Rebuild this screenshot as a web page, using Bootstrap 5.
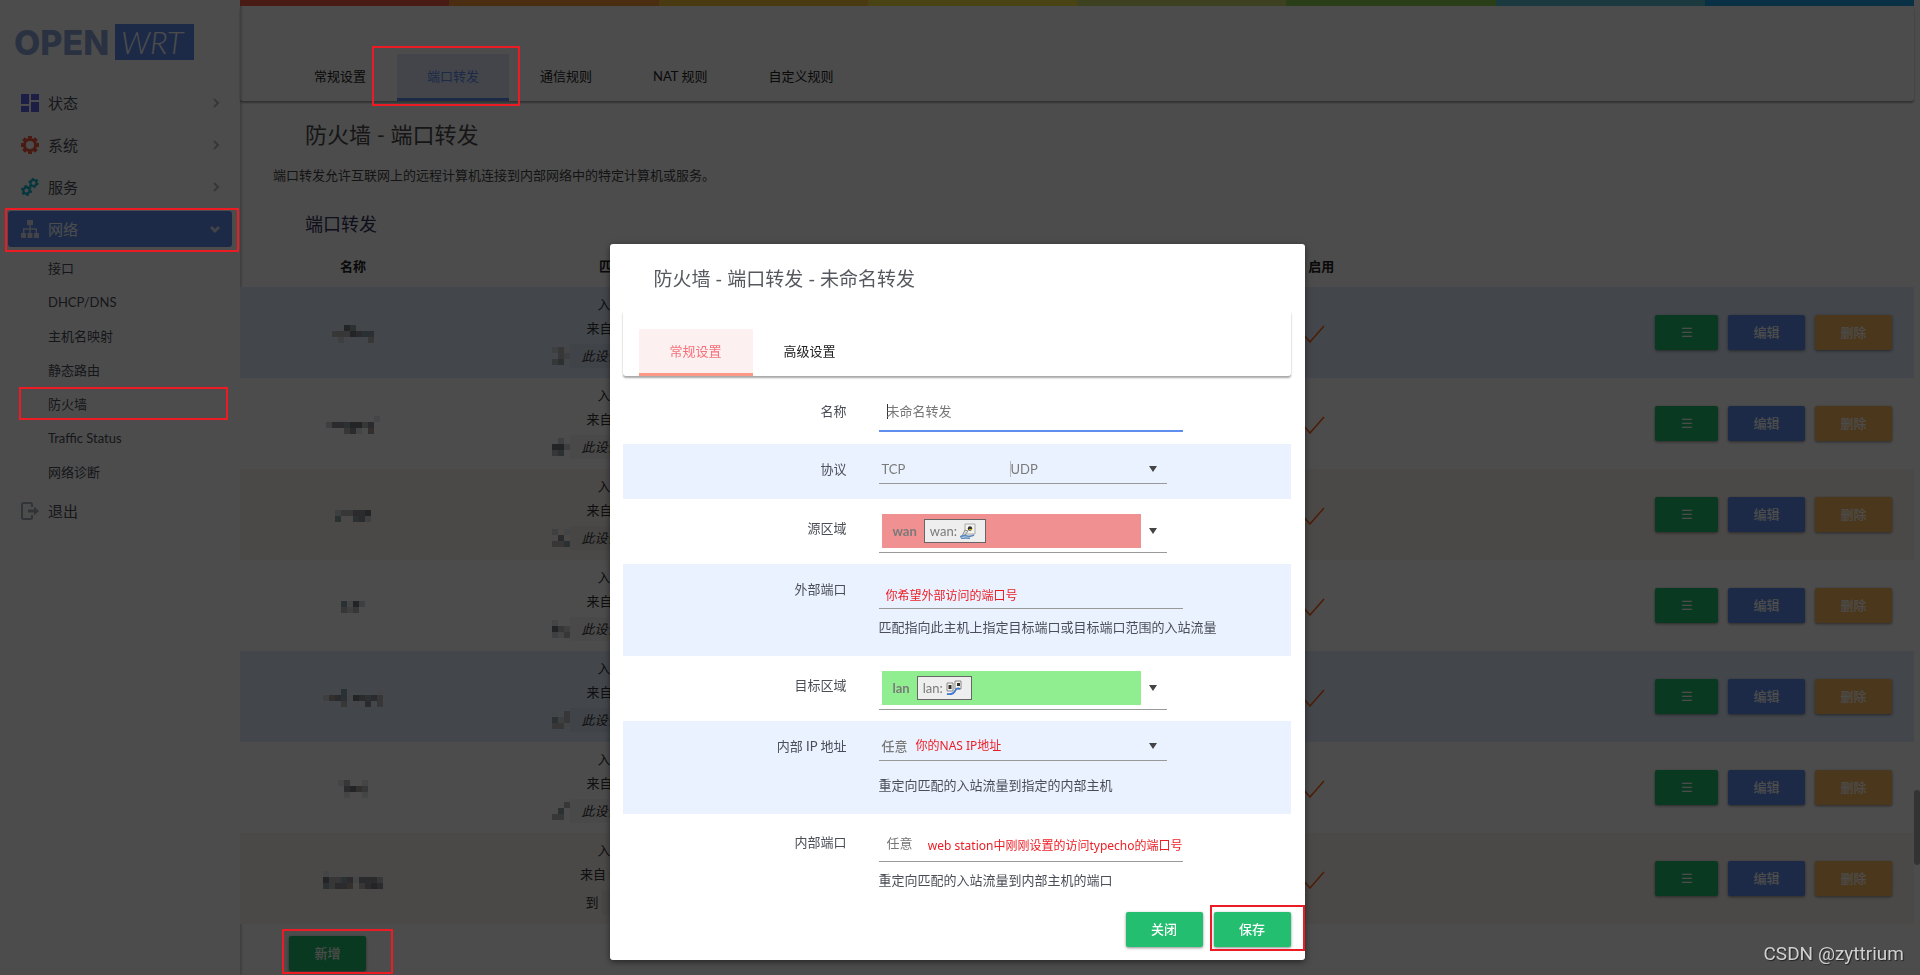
<!DOCTYPE html>
<html lang="zh-CN">
<head>
<meta charset="utf-8">
<meta name="viewport" content="width=device-width, initial-scale=1">
<title>OpenWrt - 防火墙</title>
<link href="https://cdn.jsdelivr.net/npm/bootstrap@5.3.0/dist/css/bootstrap.min.css" rel="stylesheet">
<style>
:root{--pick:#ed1c24;--blue:#5e8eee;--green:#24be70;--orange:#fab75c}
body{font-family:Lato,"Noto Sans CJK SC",sans-serif;font-size:13px;line-height:20px;color:#4a4e57;background:#fff;min-height:100vh;padding-right:6px}
a{color:inherit;text-decoration:none}
/* sidebar */
.side{width:240px;box-shadow:0 0 4px rgba(0,0,0,.45)}
.brand{padding:18px 0 19px 14px}
.side-nav{padding:0 8px}
.side-item{height:36px;margin-bottom:6px;padding:0 12px 0 13px;font-size:15px;border-radius:3px}
.side-item .ico{width:18px;height:18px;margin-right:9px}
.side-item.current{background:var(--blue);color:#fff}
.sub-nav{padding:0 8px 0 40px;margin-bottom:6px}
.sub-nav a{display:block;height:30px;margin-bottom:4px;line-height:30px}
.sub-nav .on{border-bottom:1px solid #5e72e4}
.pick{position:absolute;z-index:1052;border:2px solid var(--pick);pointer-events:none}
.pick-side{inset:-3px -7px -5px -3px}
.pick-sub{inset:-2px -4px -2px -29px}
.pick-tab{inset:-8px -11px -8px -25px}
.pick-add{inset:-7px -27px -3px -7px}
.pick-save{inset:-7px -14px -4px -4px}
/* main */
.stripes{height:6px}
.stripes i{flex:1}
.tab-strip{box-shadow:0 2px 2px rgba(0,0,0,.35);border-radius:3px}
.main-tabs{padding:48px 0 0 44px}
.main-tabs nav{gap:1px}
.tab-link{display:block;height:47px;line-height:44px;padding:0 30px;border-bottom:3px solid transparent;color:#222}
.main-tabs .tab-link.on{background:#dfe6f8;border-color:var(--blue);color:var(--blue)}
.main-title{font-size:22px;line-height:28px;margin:20px 0 16px 65px;color:#4a4a4a}
.desc{margin:0 0 27px 33px;color:#444}
.sec-title{font-size:18px;line-height:24px;margin:0 0 22px 65px;color:#32325d}
.rules{table-layout:fixed;margin:0;width:100%}
.rules th,.rules td{padding:0;text-align:center;vertical-align:middle;border:0;color:#333}
.rules th{height:29px;line-height:17px;padding-bottom:12px;color:#222}
.rules tr>*{background:transparent}
.rules tbody td{height:91px}
.t0{background:#dfebfb}.t1{background:#fefefe}.t2{background:#f8f4ed}
.rule-line{height:24px;line-height:24px}
.rule-line.last{height:33px;line-height:26px;padding-top:3px}
.addr{position:relative;background:rgba(0,0,0,.04);padding:4px 17px 4px 11px;font-style:italic}
.mask{position:absolute;right:100%;top:3px}
.btns{gap:10px;padding-right:22px}
.btn-rule{height:35px;padding:0;border:0;border-radius:2px;color:#fff;font-size:13px;line-height:33px;font-weight:500;box-shadow:0 1px 3px rgba(0,0,0,.45)}
.w-s{width:63px}.w-m{width:77px}
.b-green{background:var(--green)}.b-blue{background:var(--blue)}.b-orange{background:var(--orange)}
.foot-add{padding:12px 0 3px 49px}
.thumb{position:fixed;right:0;top:81vh;width:6px;height:75px;border-radius:3px;background:#aaa}
/* dialog */
.shade{z-index:1050;position:fixed;inset:0;background:rgba(0,0,0,.7)}
.dlg-wrap{padding:25vh 6px 0 0;overflow:hidden}
.dlg{width:695px;max-width:100%;margin:0 auto}
.dlg-box{border:0;border-radius:3px;padding:20px 14px 13px 13px;box-shadow:0 2px 6px rgba(0,0,0,.5)}
.dlg-title{font-size:19px;line-height:30px;margin:0 0 16px 31px;font-weight:400;color:#55585e}
.dlg-tabs{padding:19px 0 0 16px;margin-bottom:13px}
.dlg-tabs .tab-link{padding:0 31px}
.dlg-tabs .tab-link.on{background:#fdf0f0;border-color:#fb9886;color:#f5707a}
.dlg-foot{gap:11px}
.f-row{padding:15px 0;color:#4a4e57}
.f-row.tint{background:#ebf2ff}
.f-name{padding:12px 0 8px}
.f-zone{padding-bottom:7px}
.f-last{padding:18px 0 22px}
.f-label{width:224px;text-align:right;margin-right:32px;line-height:20px}
.f-field{position:relative;width:304px;height:30px;padding:0 8px 6px;font-size:13px;border:0;border-bottom:1px solid #999;border-radius:0;background:transparent;outline:0;color:#777;display:block}
.f-field::placeholder{color:#777;opacity:1}
.f-field.active{border-bottom:2px solid var(--blue);height:31px;margin-bottom:4px;padding-bottom:8px;background:linear-gradient(#333,#333) 8px 3px/1px 15px no-repeat}
.f-field.noted{color:var(--pick);font-family:"Noto Sans","Noto Sans CJK SC",sans-serif;font-size:12px;padding:4px 7px 0}
.pull{width:288px;padding:0 10px 4px 3px;border:0;border-bottom:1px solid #999;background:transparent;color:#7a7a7a;text-align:left;font-size:13px;line-height:20px}
.pull .car{width:0;height:0;border:4px solid transparent;border-top:6px solid #444;border-bottom:0}
.opt-a{width:128px}.opt-b{border-left:1px solid #bbb;line-height:16px}
.zone{width:259px;height:34px;padding-left:11px}
.z-wan{background:#f09090}.z-lan{background:#90ee90}
.chip{height:24px;margin-left:7px;padding:0 9px 0 5px;border:1px solid #666;background:#eee}
.hint{margin-top:14px;padding-bottom:4px}
.note{position:absolute;white-space:nowrap;font-weight:400;color:var(--pick);font-family:"Noto Sans","Noto Sans CJK SC",sans-serif;font-size:12px}
.csdn{position:fixed;z-index:1060;right:16px;bottom:9px;font:19px/24px Roboto,"Liberation Sans",sans-serif;color:#d0d0d0;text-shadow:1px 1px 1px #222}
</style>
</head>
<body>
<div class="d-flex min-vh-100">
  <aside class="side flex-shrink-0">
    <div class="brand">
      <svg width="180" height="48" class="d-block" role="img" aria-label="OpenWrt">
        <text x="0" y="37" font-family="Inter" font-weight="800" font-size="34" fill="#8da8de">OPEN</text>
        <rect x="101" y="6" width="79" height="36" fill="#5e8eee"/>
        <text x="107" y="36" font-family="Lato" font-style="italic" font-weight="300" font-size="31" fill="#fff">WRT</text>
      </svg>
    </div>
    <nav class="side-nav">
      <a href="#" class="side-item d-flex align-items-center"><svg class="ico" viewBox="0 0 18 18" fill="#6064ea"><path d="M0 0h8v10H0zM10 0h8v6h-8zM0 12h8v6H0zM10 8h8v10h-8z"/></svg><span class="flex-grow-1">状态</span><svg width="8" height="10" viewBox="0 0 8 10" fill="none" stroke="#b4b8bd" stroke-width="2"><path d="M2 1l4 4-4 4"/></svg></a>
      <a href="#" class="side-item d-flex align-items-center"><svg class="ico" viewBox="0 0 18 18"><g stroke="#f4573c" fill="none"><circle cx="9" cy="9" r="5.6" stroke-width="3"/><path stroke-width="4" d="M9 0v2.500M9 15.500V18M0 9h2.500M15.500 9H18M2.600 2.600l2 2M13.400 13.400l2 2M2.600 15.400l2-2M13.400 4.600l2-2"/></g></svg><span class="flex-grow-1">系统</span><svg width="8" height="10" viewBox="0 0 8 10" fill="none" stroke="#b4b8bd" stroke-width="2"><path d="M2 1l4 4-4 4"/></svg></a>
      <a href="#" class="side-item d-flex align-items-center"><svg class="ico" viewBox="0 0 18 18"><g stroke="#11b4cf" fill="none"><circle cx="12.500" cy="5" r="3" stroke-width="2"/><circle cx="12.500" cy="5" r="4.400" stroke-width="1.600" stroke-dasharray="2.200 2.400"/><circle cx="5.500" cy="12.500" r="3.200" stroke-width="2.400"/><circle cx="5.500" cy="12.500" r="4.800" stroke-width="1.600" stroke-dasharray="2.400 2.600"/></g></svg><span class="flex-grow-1">服务</span><svg width="8" height="10" viewBox="0 0 8 10" fill="none" stroke="#b4b8bd" stroke-width="2"><path d="M2 1l4 4-4 4"/></svg></a>
      <a href="#" class="side-item current position-relative d-flex align-items-center"><svg class="ico" viewBox="0 0 18 18" fill="#dfe4ee"><path d="M6 0h6v5H6zM0 13h5v5H0zM6.500 13h5v5h-5zM13 13h5v5h-5zM8.300 5h1.400v8H8.300zM2 8.300h14v1.400H2zM2 9h1.400v4H2zM14.600 9H16v4h-1.400z"/></svg><span class="flex-grow-1">网络</span><svg width="10" height="8" viewBox="0 0 10 8" fill="none" stroke="#dfe4ee" stroke-width="2.800"><path d="M1 2l4 4 4-4"/></svg><span class="pick pick-side"></span></a>
      <div class="sub-nav">
        <a href="#">接口</a><a href="#">DHCP/DNS</a><a href="#">主机名映射</a><a href="#">静态路由</a>
        <a href="#" class="on position-relative">防火墙<span class="pick pick-sub"></span></a>
        <a href="#">Traffic Status</a><a href="#">网络诊断</a>
      </div>
      <a href="#" class="side-item d-flex align-items-center"><svg class="ico" viewBox="0 0 18 18"><path d="M11 5V2.500Q11 1 9.500 1h-7Q1 1 1 2.500v13Q1 17 2.500 17h7q1.500 0 1.500-1.500V13" fill="none" stroke="#a6aeb8" stroke-width="2"/><path d="M7 7.500h6V4.500L18 9l-5 4.500v-3H7z" fill="#a6aeb8"/></svg><span>退出</span></a>
    </nav>
  </aside>

  <main class="flex-grow-1">
    <div class="stripes d-flex" id="stripes"></div>
    <div class="tab-strip main-tabs">
      <nav class="d-flex">
        <a href="#" class="tab-link">常规设置</a>
        <a href="#" class="tab-link on position-relative">端口转发<span class="pick pick-tab"></span></a>
        <a href="#" class="tab-link">通信规则</a>
        <a href="#" class="tab-link">NAT 规则</a>
        <a href="#" class="tab-link">自定义规则</a>
      </nav>
    </div>
    <h2 class="main-title fw-normal">防火墙 - 端口转发</h2>
    <p class="desc">端口转发允许互联网上的远程计算机连接到内部网络中的特定计算机或服务。</p>
    <h3 class="sec-title fw-normal">端口转发</h3>
    <table class="table rules">
      <colgroup><col style="width:13.5%"><col style="width:19%"><col style="width:29.6%"><col style="width:5%"><col></colgroup>
      <thead><tr><th>名称</th><th>匹配规则</th><th></th><th>启用</th><th></th></tr></thead>
      <tbody id="rules"></tbody>
    </table>
    <div class="foot-add"><span class="position-relative d-inline-flex"><button type="button" class="btn-rule w-m b-green">新增</button><span class="pick pick-add"></span></span></div>
  </main>
</div>
<div class="thumb"></div>
<div class="shade"></div>

<div class="modal d-block dlg-wrap" role="dialog" aria-labelledby="dlgTitle">
  <div class="dlg">
    <div class="modal-content dlg-box">
      <h4 class="dlg-title" id="dlgTitle">防火墙 - 端口转发 - 未命名转发</h4>
      <nav class="tab-strip dlg-tabs d-flex">
        <a href="#" class="tab-link on">常规设置</a><a href="#" class="tab-link">高级设置</a>
      </nav>
      <form>
        <div class="f-row f-name d-flex">
          <label class="f-label" for="fName">名称</label>
          <div><input id="fName" class="f-field active" placeholder="未命名转发"></div>
        </div>
        <div class="f-row tint d-flex">
          <label class="f-label" for="fProto">协议</label>
          <button type="button" id="fProto" class="pull d-flex align-items-center"><span class="opt-a">TCP</span><span class="opt-b flex-grow-1">UDP</span><i class="car"></i></button>
        </div>
        <div class="f-row f-zone d-flex">
          <label class="f-label pt-1" for="fSrc">源区域</label>
          <button type="button" id="fSrc" class="pull d-flex align-items-center mb-1"><span class="zone z-wan d-flex align-items-center"><b>wan</b><span class="chip d-flex align-items-center">wan:&nbsp;<svg width="16" height="16" viewBox="0 0 16 16"><path d="M5 1h10v10H5z" fill="#f4f4ee" stroke="#aaa"/><circle cx="10" cy="5.500" r="2.200" fill="#333"/><path d="M9 6.500h3" stroke="#c8b400"/><path d="M5 7l3 1-3 4-3 1z" fill="#ddd" stroke="#777" stroke-width=".8"/><path d="M0 14q4-2 7-1t7-1M1 15.500q5-1 9 0" stroke="#5d89bf" stroke-width="1.600" fill="none"/></svg></span></span><i class="car ms-2"></i></button>
        </div>
        <div class="f-row tint d-flex">
          <label class="f-label" for="fPort">外部端口</label>
          <div><input id="fPort" class="f-field noted" value="你希望外部访问的端口号"><div class="mt-2 pb-1">匹配指向此主机上指定目标端口或目标端口范围的入站流量</div></div>
        </div>
        <div class="f-row f-zone d-flex">
          <label class="f-label pt-1" for="fDst">目标区域</label>
          <button type="button" id="fDst" class="pull d-flex align-items-center mb-1"><span class="zone z-lan d-flex align-items-center"><b>lan</b><span class="chip d-flex align-items-center">lan:&nbsp;<svg width="16" height="16" viewBox="0 0 16 16"><path d="M1 3h6v8H1zM9 1h6v8H9z" fill="#f4f4ee" stroke="#888"/><path d="M2.500 5h3v4h-3zM11 3h3v3h-3z" fill="#333"/><path d="M1 14q6 1 8-3t5-2" stroke="#3f7ad0" stroke-width="1.800" fill="none"/></svg></span></span><i class="car ms-2"></i></button>
        </div>
        <div class="f-row tint d-flex">
          <label class="f-label" for="fIp">内部 IP 地址</label>
          <div><button type="button" id="fIp" class="pull d-flex align-items-center"><span class="position-relative fw-medium">任意<span class="note ms-2">你的NAS IP地址</span></span><i class="car ms-auto"></i></button><div class="hint">重定向匹配的入站流量到指定的内部主机</div></div>
        </div>
        <div class="f-row f-last d-flex">
          <label class="f-label" for="fInPort">内部端口</label>
          <div class="position-relative"><input id="fInPort" class="f-field" placeholder="任意"><span class="note top-0 end-0 pt-1">web station中刚刚设置的访问typecho的端口号</span><div class="mt-2">重定向匹配的入站流量到内部主机的端口</div></div>
        </div>
      </form>
      <div class="dlg-foot d-flex justify-content-end">
        <button type="button" class="btn-rule w-m b-green">关闭</button>
        <span class="position-relative d-inline-flex"><button type="button" class="btn-rule w-m b-green">保存</button><span class="pick pick-save"></span></span>
      </div>
    </div>
  </div>
</div>
<div class="csdn">CSDN @zyttrium</div>

<script src="https://cdn.jsdelivr.net/npm/bootstrap@5.3.0/dist/js/bootstrap.bundle.min.js"></script>
<script>
// coloured bar across the top of the page
document.getElementById('stripes').innerHTML =
  ['#f05a48','#fa963c','#f7c13c','#f7e346','#cfd96b','#8cd24d','#5ac1d2','#21a0e6']
  .map(c => `<i style="background:${c}"></i>`).join('');

// masked names and addresses: a = darkest cell, g = faintest
const shade = {a:'#737880',b:'#8f9296',c:'#92a0ac',d:'#a89f9a',e:'#b8b8b8',f:'#ced2d6',g:'#e4e6ea'};
function mask(lines, cls) {
  const w = Math.max(...lines.map(l => l.length));
  let r = '';
  lines.forEach((l, y) => [...l].forEach((k, x) => {
    if (shade[k]) r += `<rect x="${x*6}" y="${y*6}" width="6" height="6" fill="${shade[k]}"/>`;
  }));
  return `<svg class="${cls}" width="${w*6}" height="${lines.length*6}">${r}</svg>`;
}
const rows = [
  [0, ['..acg..','eeeabcc','.f....e'], ['feg','.ef','ecg']],
  [1, ['........g','fbbcaaeb.','...ebg.d.'], ['.f.','aaf','ec.']],
  [2, ['feebba','c..cbf'], ['f.g','.b.','eec']],
  [1, ['cgaf','efe.'], ['g..','aef','fge']],
  [0, ['...c.....g','fdbcgabcbe','...e.g.b.e'], ['g.e','cfe','eeg']],
  [1, ['ge..g','.bade','.g..g'], ['..e','.c.','ee.']],
  [2, ['g.........','aeecbgbbbe','cebbd.ebab'], null]
];
document.getElementById('rules').innerHTML = rows.map(([t, name, ip]) => `
<tr class="t${t}"><td>${mask(name, '')}</td>
<td><div class="rule-line">入站 IPv4</div>
<div class="rule-line">${ip ? '来自 wan0 区' : '来自 任意 wan0'}</div>
<div class="rule-line last">${ip ? `<span class="addr">此设备 的端口${mask(ip, 'mask')}</span>` : '到 <span class="addr">lan:80</span>'}</div></td>
<td></td>
<td><svg class="me-3" width="28" height="18" fill="none" stroke="#ff5c10" stroke-width="1.500"><path d="M4 9l7 8L25 1"/></svg></td>
<td><div class="btns d-flex justify-content-end">
<button type="button" class="btn-rule w-s b-green">☰</button>
<button type="button" class="btn-rule w-m b-blue">编辑</button>
<button type="button" class="btn-rule w-m b-orange">删除</button></div></td></tr>`).join('');
</script>
</body>
</html>
